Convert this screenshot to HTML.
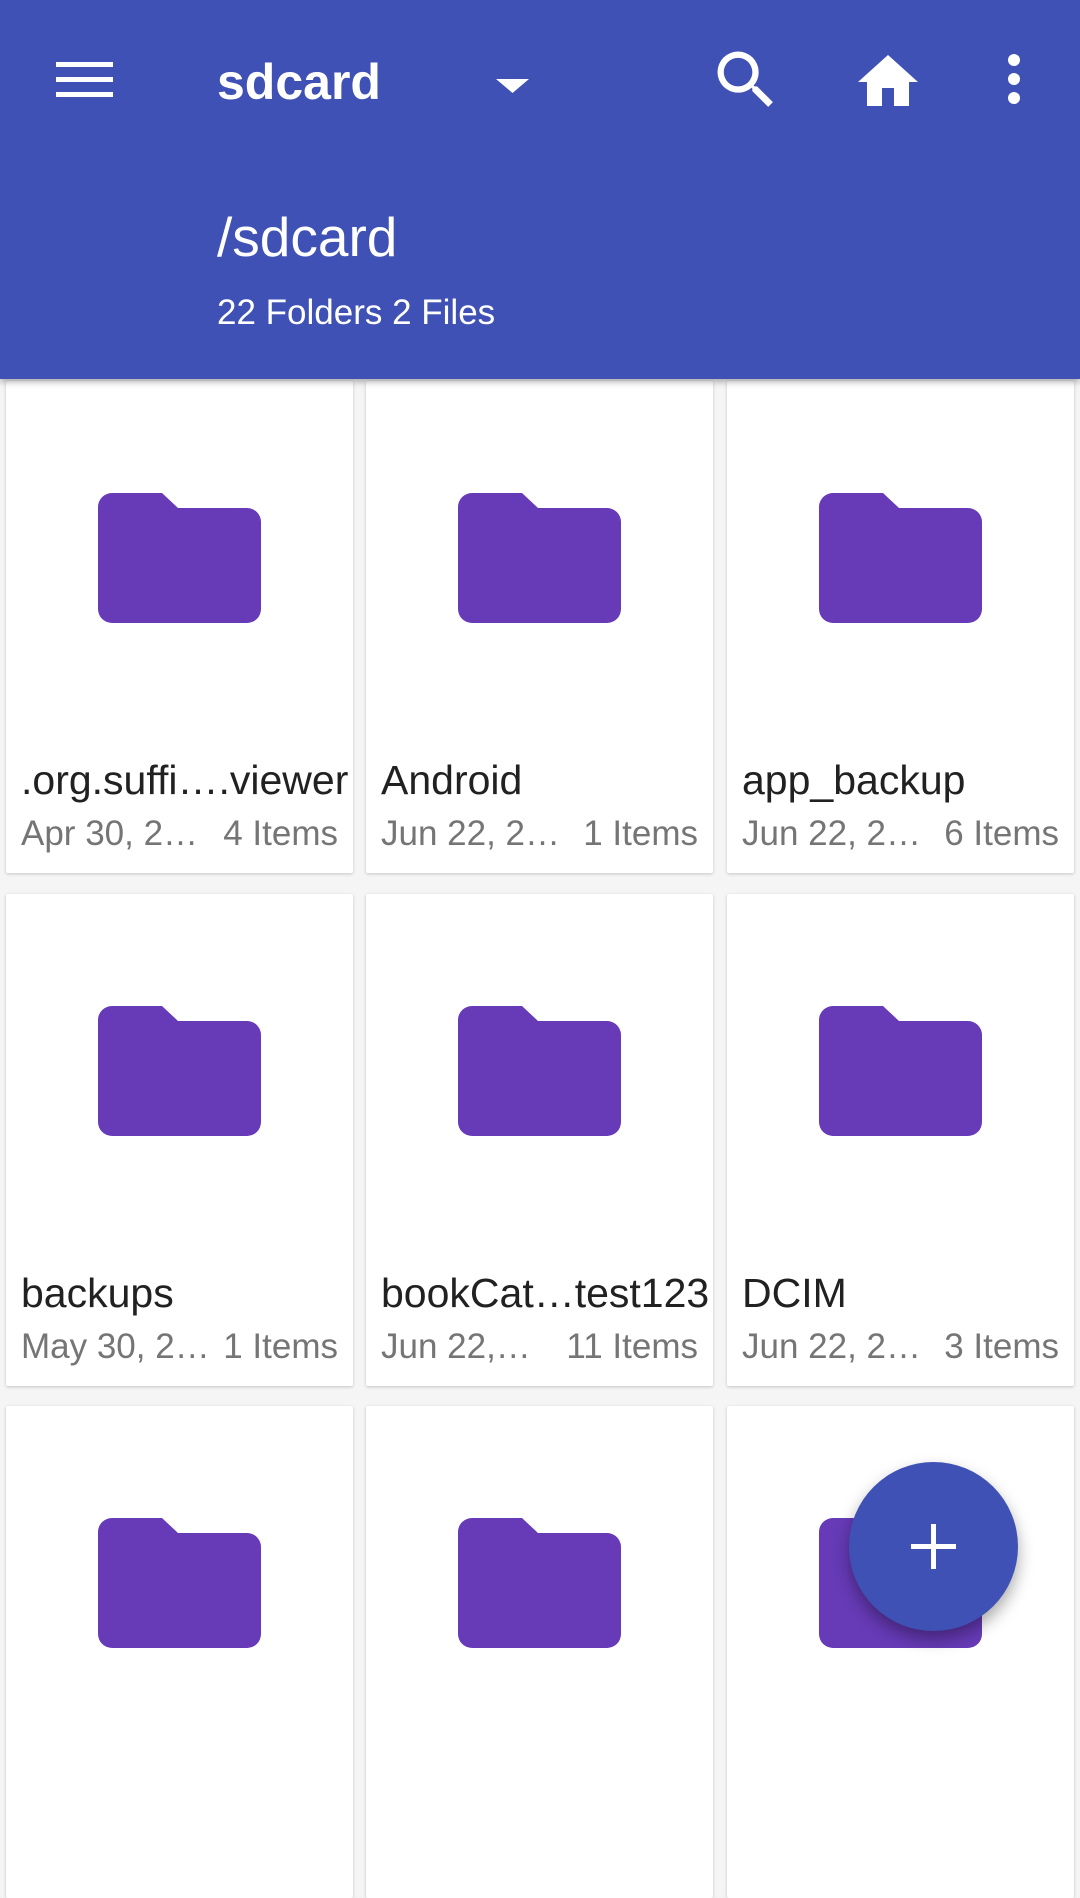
<!DOCTYPE html>
<html><head><meta charset="utf-8"><style>
*{margin:0;padding:0;box-sizing:border-box}
body{width:1080px;height:1699px;overflow:hidden;background:#f5f5f5;font-family:"Liberation Sans",sans-serif;position:relative}
.hdr{position:absolute;left:0;top:0;width:1080px;height:379px;background:#3f51b5;box-shadow:0 3px 6px rgba(0,0,0,.3);z-index:2;color:#fff}
.card{position:absolute;width:347px;height:492px;background:#fff;box-shadow:0 1px 3px rgba(0,0,0,.2);border-radius:2px}
.fold{position:absolute;left:92px;top:112px}
.nm{position:absolute;left:15px;top:376px;font-size:41px;color:#212121;white-space:nowrap}
.dt{position:absolute;left:15px;top:433px;font-size:35px;color:#757575;white-space:nowrap}
.it{position:absolute;right:15px;top:433px;font-size:35px;color:#757575;white-space:nowrap}
</style></head><body>
<div class="hdr">
<svg style="position:absolute;left:56px;top:62px" width="57" height="35"><rect y="0" width="57" height="5" fill="#fff"/><rect y="15" width="57" height="5" fill="#fff"/><rect y="30" width="57" height="5" fill="#fff"/></svg>
<div style="position:absolute;left:217px;top:53px;font-size:50px;font-weight:bold">sdcard</div>
<svg style="position:absolute;left:496px;top:79px" width="33" height="14"><path d="M0 0H33L16.5 14Z" fill="#fff"/></svg>
<svg style="position:absolute;left:708px;top:42px" width="76" height="76" viewBox="0 0 24 24"><path fill="#fff" d="M15.5 14h-.79l-.28-.27A6.47 6.47 0 0 0 16 9.5 6.5 6.5 0 1 0 9.5 16c1.61 0 3.09-.59 4.23-1.57l.27.28v.79l5 4.99L20.49 19l-4.99-5zm-6 0C7.01 14 5 11.99 5 9.5S7.01 5 9.5 5 14 7.01 14 9.5 11.99 14 9.5 14z"/></svg>
<svg style="position:absolute;left:852px;top:46px" width="72" height="72" viewBox="0 0 24 24"><path fill="#fff" d="M10 20v-6h4v6h5v-8h3L12 3 2 12h3v8z"/></svg>
<svg style="position:absolute;left:1004px;top:52px" width="20" height="54"><circle cx="10" cy="8" r="6" fill="#fff"/><circle cx="10" cy="27" r="6" fill="#fff"/><circle cx="10" cy="46" r="6" fill="#fff"/></svg>
<div style="position:absolute;left:217px;top:205px;font-size:55px">/sdcard</div>
<div style="position:absolute;left:217px;top:293px;font-size:35px">22 Folders 2 Files</div>
</div>

<div class="card" style="left:6px;top:381px"><svg class="fold" width="163" height="130" viewBox="0 0 163 130"><path fill="#673ab7" d="M14 0H64L80 15H149A14 14 0 0 1 163 29V116A14 14 0 0 1 149 130H14A14 14 0 0 1 0 116V14A14 14 0 0 1 14 0Z"/></svg><div class="nm">.org.suffi….viewer</div><div class="dt">Apr 30, 2…</div><div class="it">4 Items</div></div>
<div class="card" style="left:366px;top:381px"><svg class="fold" width="163" height="130" viewBox="0 0 163 130"><path fill="#673ab7" d="M14 0H64L80 15H149A14 14 0 0 1 163 29V116A14 14 0 0 1 149 130H14A14 14 0 0 1 0 116V14A14 14 0 0 1 14 0Z"/></svg><div class="nm">Android</div><div class="dt">Jun 22, 2…</div><div class="it">1 Items</div></div>
<div class="card" style="left:727px;top:381px"><svg class="fold" width="163" height="130" viewBox="0 0 163 130"><path fill="#673ab7" d="M14 0H64L80 15H149A14 14 0 0 1 163 29V116A14 14 0 0 1 149 130H14A14 14 0 0 1 0 116V14A14 14 0 0 1 14 0Z"/></svg><div class="nm">app_backup</div><div class="dt">Jun 22, 2…</div><div class="it">6 Items</div></div>

<div class="card" style="left:6px;top:894px"><svg class="fold" width="163" height="130" viewBox="0 0 163 130"><path fill="#673ab7" d="M14 0H64L80 15H149A14 14 0 0 1 163 29V116A14 14 0 0 1 149 130H14A14 14 0 0 1 0 116V14A14 14 0 0 1 14 0Z"/></svg><div class="nm">backups</div><div class="dt">May 30, 2…</div><div class="it">1 Items</div></div>
<div class="card" style="left:366px;top:894px"><svg class="fold" width="163" height="130" viewBox="0 0 163 130"><path fill="#673ab7" d="M14 0H64L80 15H149A14 14 0 0 1 163 29V116A14 14 0 0 1 149 130H14A14 14 0 0 1 0 116V14A14 14 0 0 1 14 0Z"/></svg><div class="nm">bookCat…test123</div><div class="dt">Jun 22,…</div><div class="it">11 Items</div></div>
<div class="card" style="left:727px;top:894px"><svg class="fold" width="163" height="130" viewBox="0 0 163 130"><path fill="#673ab7" d="M14 0H64L80 15H149A14 14 0 0 1 163 29V116A14 14 0 0 1 149 130H14A14 14 0 0 1 0 116V14A14 14 0 0 1 14 0Z"/></svg><div class="nm">DCIM</div><div class="dt">Jun 22, 2…</div><div class="it">3 Items</div></div>

<div class="card" style="left:6px;top:1406px"><svg class="fold" width="163" height="130" viewBox="0 0 163 130"><path fill="#673ab7" d="M14 0H64L80 15H149A14 14 0 0 1 163 29V116A14 14 0 0 1 149 130H14A14 14 0 0 1 0 116V14A14 14 0 0 1 14 0Z"/></svg></div>
<div class="card" style="left:366px;top:1406px"><svg class="fold" width="163" height="130" viewBox="0 0 163 130"><path fill="#673ab7" d="M14 0H64L80 15H149A14 14 0 0 1 163 29V116A14 14 0 0 1 149 130H14A14 14 0 0 1 0 116V14A14 14 0 0 1 14 0Z"/></svg></div>
<div class="card" style="left:727px;top:1406px"><svg class="fold" width="163" height="130" viewBox="0 0 163 130"><path fill="#673ab7" d="M14 0H64L80 15H149A14 14 0 0 1 163 29V116A14 14 0 0 1 149 130H14A14 14 0 0 1 0 116V14A14 14 0 0 1 14 0Z"/></svg></div>

<div style="position:absolute;left:849px;top:1462px;width:169px;height:169px;border-radius:50%;background:#3f51b5;box-shadow:0 8px 16px rgba(0,0,0,.35);z-index:3">
<div style="position:absolute;left:62px;top:82px;width:45px;height:5px;background:#fff"></div>
<div style="position:absolute;left:82px;top:62px;width:5px;height:45px;background:#fff"></div>
</div>
</body></html>
